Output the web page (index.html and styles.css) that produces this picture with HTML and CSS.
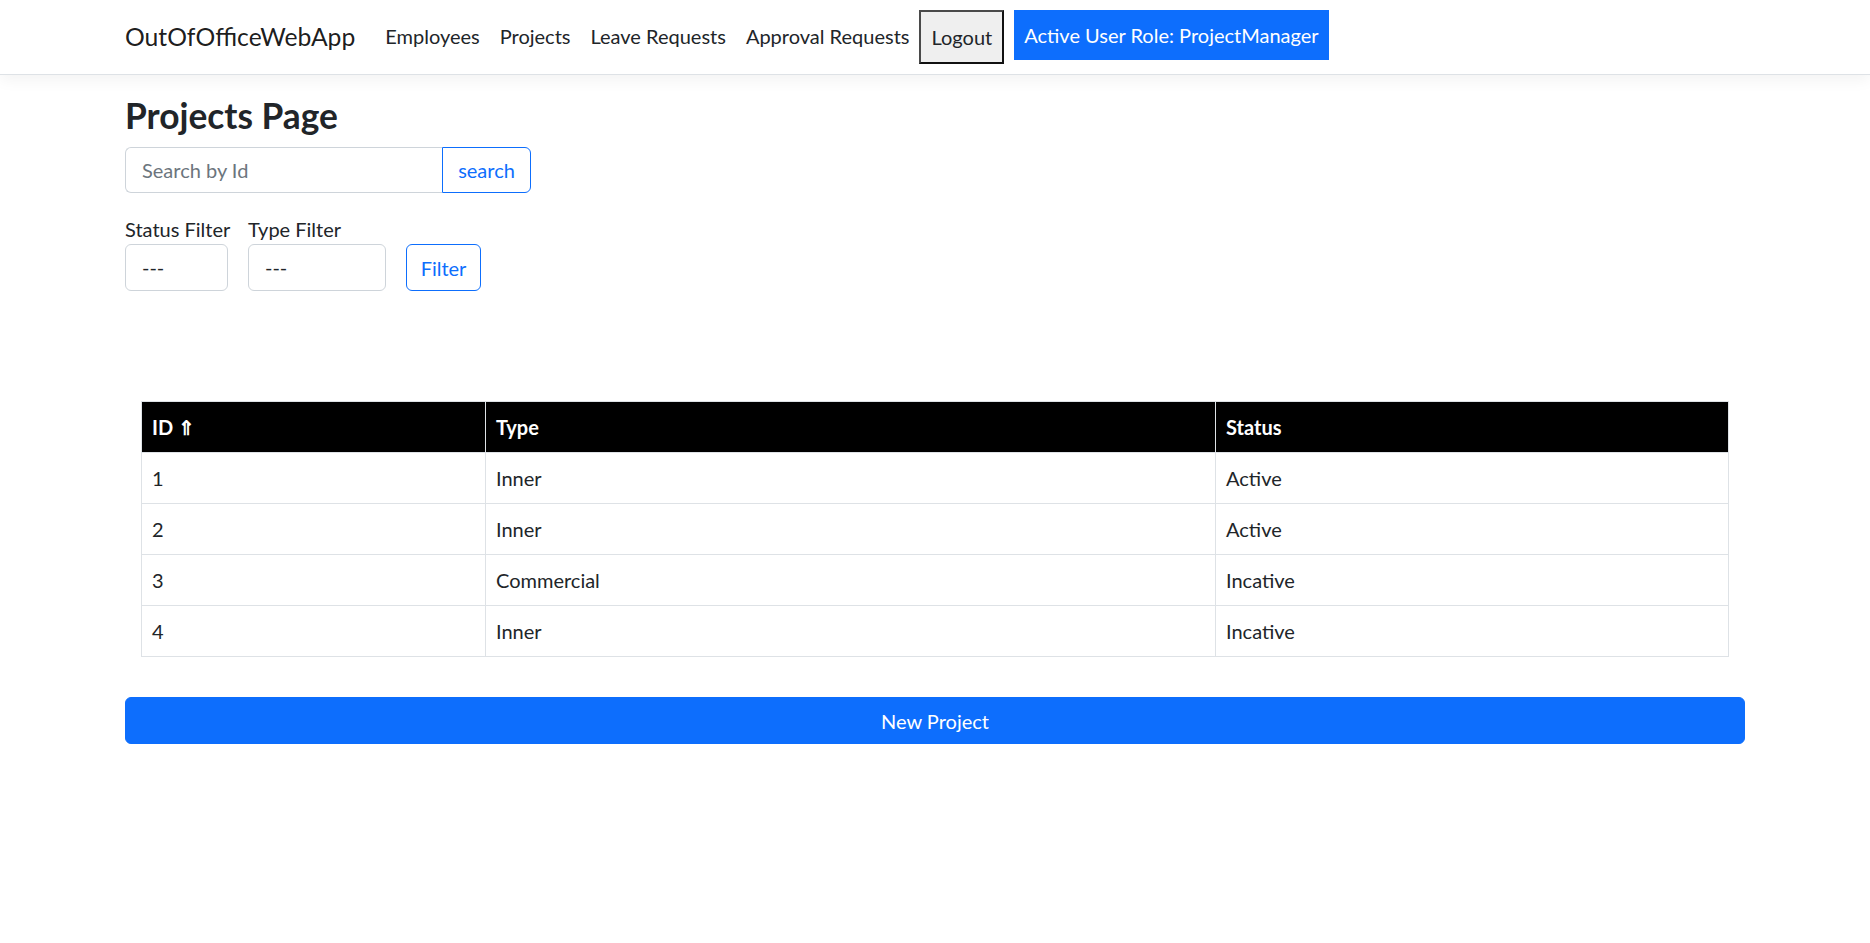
FILE: index.html
```html
<!DOCTYPE html>
<html lang="en">
<head>
<meta charset="utf-8">
<title>Projects - OutOfOfficeWebApp</title>
<link rel="stylesheet" href="styles.css">
</head>
<body>
<nav class="navbar">
  <div class="nav-inner">
    <a class="brand" href="#">OutOfOfficeWebApp</a>
    <ul class="nav-links">
      <li><a href="#">Employees</a></li>
      <li><a href="#">Projects</a></li>
      <li><a href="#">Leave Requests</a></li>
      <li><a href="#">Approval Requests</a></li>
    </ul>
    <button class="logout" type="button">Logout</button>
    <div class="role">Active User Role: ProjectManager</div>
  </div>
</nav>
<main class="content">
  <h3 class="page-title">Projects Page</h3>
  <div class="search-group">
    <input class="search-input" type="text" placeholder="Search by Id">
    <button class="btn-outline search-btn" type="button">search</button>
  </div>
  <div class="filters">
    <div class="filter-col col-status">
      <label class="filter-label">Status Filter</label>
      <div class="select">---</div>
    </div>
    <div class="filter-col col-type">
      <label class="filter-label">Type Filter</label>
      <div class="select">---</div>
    </div>
    <button class="btn-outline filter-btn" type="button">Filter</button>
  </div>
  <div class="table-wrap">
    <table class="grid">
      <thead>
        <tr><th class="c-id">ID <span class="sort">&#8657;</span></th><th class="c-type">Type</th><th class="c-status">Status</th></tr>
      </thead>
      <tbody>
        <tr><td>1</td><td>Inner</td><td>Active</td></tr>
        <tr><td>2</td><td>Inner</td><td>Active</td></tr>
        <tr><td>3</td><td>Commercial</td><td>Incative</td></tr>
        <tr><td>4</td><td>Inner</td><td>Incative</td></tr>
      </tbody>
    </table>
  </div>
  <button class="btn-primary new-btn" type="button">New Project</button>
</main>
</body>
</html>
```
FILE: styles.css
```css
* { box-sizing: border-box; }
html, body { margin: 0; padding: 0; }
body {
  font-family: Lato, "Noto Sans", "Liberation Sans", sans-serif;
  font-size: 20px;
  line-height: 1.5;
  color: #212529;
  background: #fff;
}
a { text-decoration: none; }

.navbar {
  background: #fff;
  border-bottom: 1px solid #dee2e6;
  box-shadow: 0 4.8px 14.4px rgba(0,0,0,.05);
  height: 75px;
}
.nav-inner {
  display: flex;
  align-items: flex-start;
  padding: 10px 0 0 125px;
}
.brand {
  font-size: 24.7px;
  line-height: 54px;
  color: rgba(0,0,0,.9);
  margin-right: 20px;
}
.nav-links {
  display: flex;
  list-style: none;
  margin: 0;
  padding: 0;
}
.nav-links a {
  display: block;
  padding: 0 10px;
  line-height: 52px;
  color: #212529;
}
.logout {
  font: inherit;
  height: 54px;
  padding: 0 10px;
  background: #efefef;
  color: #212529;
  border: 2px solid;
  border-color: #4a4a4a #111 #111 #4a4a4a;
  margin-right: 10px;
}
.role {
  height: 50px;
  line-height: 50px;
  padding: 0 10px;
  background: #0d6efd;
  color: #fff;
}

.content {
  padding: 0 125px;
}
.page-title {
  margin: 20px 0 10px;
  font-size: 35.3px;
  font-weight: 700;
  line-height: 1.2;
}
.search-group {
  display: flex;
  height: 46px;
}
.search-input {
  width: 317px;
  height: 46px;
  font: inherit;
  padding: 0 16px;
  border: 1px solid #ced4da;
  border-right: none;
  border-radius: 6px 0 0 6px;
  color: #212529;
}
.search-input::placeholder { color: #6c757d; }
.btn-outline {
  font: inherit;
  background: #fff;
  color: #0d6efd;
  border: 1px solid #0d6efd;
  border-radius: 6px;
  height: 46px;
  padding: 0 12px;
}
.search-btn {
  width: 89px;
  border-radius: 0 6px 6px 0;
}
.filters {
  display: flex;
  align-items: flex-end;
  gap: 20px;
  margin-top: 22px;
}
.filter-col { display: flex; flex-direction: column; }
.col-status { width: 103px; }
.col-type { width: 138px; }
.filter-label { line-height: 28.8px; white-space: nowrap; }
.select {
  height: 47px;
  line-height: 45px;
  padding: 0 16px;
  border: 1px solid #ced4da;
  border-radius: 6px;
}
.filter-btn { width: 75px; height: 47px; }

.table-wrap {
  padding: 0 16px;
  margin-top: 110px;
}
.grid {
  width: 100%;
  border-collapse: collapse;
  border: 1px solid #dee2e6;
}
.grid th, .grid td {
  border: 1px solid #dee2e6;
  padding: 11px 10px;
  line-height: 28px;
  text-align: left;
}
.grid th {
  background: #000;
  color: #fff;
  font-weight: 700;
}
.c-id { width: 344px; }
.c-type { width: 730px; }
.sort { font-size: 20px; font-weight: 700; color: #fff; }
.btn-primary {
  font: inherit;
  background: #0d6efd;
  color: #fff;
  border: 1px solid #0d6efd;
  border-radius: 6px;
}
.new-btn {
  display: block;
  width: 100%;
  height: 47px;
  margin-top: 40px;
}
```
